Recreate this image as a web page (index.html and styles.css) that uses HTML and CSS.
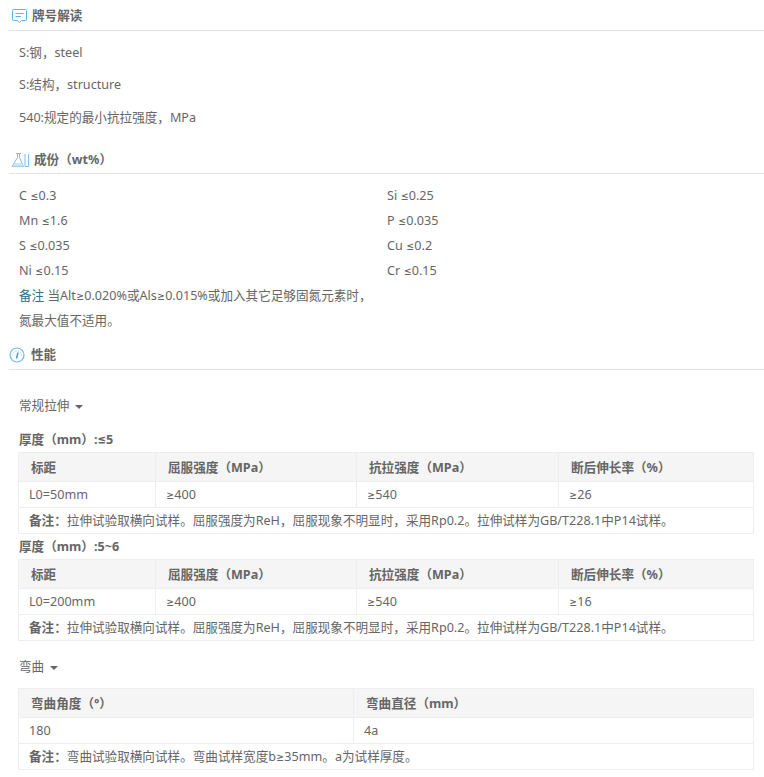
FILE: index.html
```html
<!DOCTYPE html>
<html lang="zh">
<head>
<meta charset="utf-8">
<title>牌号解读</title>
<link rel="stylesheet" href="styles.css">
</head>
<body>
<section class="sec">
  <h2 class="title t1">
    <svg class="ico" width="17" height="16" viewBox="0 0 17 16" fill="none" stroke="#5fb2e6"><path d="M2.500 1.500h12a1 1 0 0 1 1 1v9a1 1 0 0 1-1 1H10.500l-2 2-2-2H2.500a1 1 0 0 1-1-1v-9a1 1 0 0 1 1-1z"/><path d="M4.500 5.500h8M4.500 8.500h5.500"/></svg>
    牌号解读
  </h2>
  <div class="meanings">
    <p>S:钢，steel</p>
    <p>S:结构，structure</p>
    <p>540:规定的最小抗拉强度，MPa</p>
  </div>
</section>
<section class="sec">
  <h2 class="title t2">
    <svg class="ico" width="18" height="16" viewBox="0 0 18 16" fill="none" stroke="#7dbce8"><path d="M6.500 1.500v4L1 14.500h11.500L8.500 5.500v-4" /><path d="M5 1.500h5"/><path d="M3.500 11h7.500l1.500 3.500H1z" fill="#c9e4f7" stroke="none"/><path d="M14 2v12.500h3.500V2" /></svg>
    成份（wt%）
  </h2>
  <div class="comp">
    <span>C ≤0.3</span><span>Si ≤0.25</span>
    <span>Mn ≤1.6</span><span>P ≤0.035</span>
    <span>S ≤0.035</span><span>Cu ≤0.2</span>
    <span>Ni ≤0.15</span><span>Cr ≤0.15</span>
  </div>
  <p class="remark"><span class="mark">备注</span> 当Alt≥0.020%或Als≥0.015%或加入其它足够固氮元素时，氮最大值不适用。</p>
</section>
<section class="sec">
  <h2 class="title t3">
    <svg class="ico" width="16" height="16" viewBox="0 0 16 16" fill="none" stroke="#6bb8ec"><circle cx="8" cy="8" r="7" stroke-width="1.200"/><path d="M3.500 8.500a4.500 4.500 0 0 1 9 0" stroke="#a9d5f3" stroke-dasharray="1.500 1"/><path d="M9 5.500 7.500 11.500" stroke="#3f97d6" stroke-width="1.400"/></svg>
    性能
  </h2>
  <div class="drop d1">常规拉伸<i class="caret"></i></div>
  <h3 class="thick">厚度（mm）:≤5</h3>
  <table class="four">
    <tr><th>标距</th><th>屈服强度（MPa）</th><th>抗拉强度（MPa）</th><th>断后伸长率（%）</th></tr>
    <tr><td>L0=50mm</td><td>≥400</td><td>≥540</td><td>≥26</td></tr>
    <tr><td colspan="4"><b>备注：</b>拉伸试验取横向试样。屈服强度为ReH，屈服现象不明显时，采用Rp0.2。拉伸试样为GB/T228.1中P14试样。</td></tr>
  </table>
  <h3 class="thick th2">厚度（mm）:5~6</h3>
  <table class="four">
    <tr><th>标距</th><th>屈服强度（MPa）</th><th>抗拉强度（MPa）</th><th>断后伸长率（%）</th></tr>
    <tr><td>L0=200mm</td><td>≥400</td><td>≥540</td><td>≥16</td></tr>
    <tr><td colspan="4"><b>备注：</b>拉伸试验取横向试样。屈服强度为ReH，屈服现象不明显时，采用Rp0.2。拉伸试样为GB/T228.1中P14试样。</td></tr>
  </table>
  <div class="drop d2">弯曲<i class="caret"></i></div>
  <table class="two">
    <tr><th>弯曲角度（°）</th><th>弯曲直径（mm）</th></tr>
    <tr><td>180</td><td>4a</td></tr>
    <tr><td colspan="2"><b>备注：</b>弯曲试验取横向试样。弯曲试样宽度b≥35mm。a为试样厚度。</td></tr>
  </table>
</section>
</body>
</html>
```
FILE: styles.css
```css
html, body { margin: 0; padding: 0; }
body {
  padding-left: 9px;
  background: #fff;
  color: #666;
  font: 12.600px/20px "Noto Sans", "Inter", "Noto Sans CJK SC", sans-serif;
  overflow: hidden;
}
p, h2, h3 { margin: 0; }
.title {
  display: flex;
  align-items: center;
  box-sizing: border-box;
  height: 31px;
  font-size: 12.600px;
  font-weight: 700;
  color: #666;
  border-bottom: 1px solid #e3e3e3;
  padding-left: 2px;
}
.t1 { padding-top: 2px; gap: 4px; }
.t2 { padding-top: 4px; gap: 5px; }
.t3 { padding: 2px 0 0; gap: 6px; margin-top: 6px; }
.ico { flex: none; }
.meanings { padding: 6px 0 9px 10px; }
.meanings p { height: 32.300px; line-height: 32.300px; }
.comp {
  display: grid;
  grid-template-columns: 368px 1fr;
  grid-auto-rows: 25px;
  padding: 9px 0 0 10px;
  line-height: 25px;
}
.remark {
  width: 356px;
  padding-left: 10px;
  line-height: 25px;
}
.mark { color: #2f6f8f; }
.drop { padding-left: 10px; line-height: 20px; }
.d1 { margin-top: 26px; }
.d2 { margin-top: 16px; margin-bottom: 11px; }
.caret {
  display: inline-block;
  margin-left: 6px;
  vertical-align: 1px;
  border: 4px solid transparent;
  border-top: 4px solid #666;
  border-bottom: 0;
}
.thick {
  margin: 14px 0 2px 10px;
  font-size: 12.600px;
  font-weight: 700;
  line-height: 20px;
  color: #666;
}
.th2 { margin-top: 3px; }
table {
  width: 736px;
  margin-left: 9px;
  border-collapse: collapse;
  table-layout: fixed;
}
th, td {
  box-sizing: border-box;
  border: 1px solid #eee;
  text-align: left;
  line-height: 20px;
}
th {
  height: 29px;
  padding: 2px 12px 0;
  background: #f5f5f5;
  font-weight: 700;
}
td { height: 26px; padding: 2px 10px 0; }
.four th:nth-child(1) { width: 137px; }
.four th:nth-child(2) { width: 201px; }
.four th:nth-child(3) { width: 202px; }
.two th:nth-child(1) { width: 335px; }
```
